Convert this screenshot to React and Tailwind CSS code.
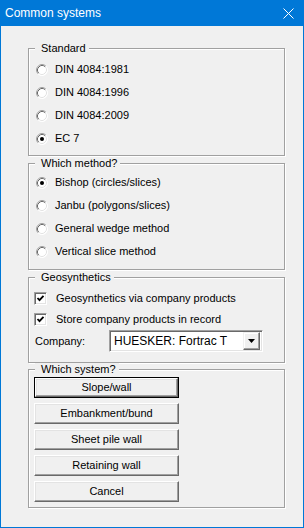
import React from 'react';

const font = { fontFamily: '"Liberation Sans", Arial, sans-serif' };

const Radio = ({ checked }) => (
    <svg width="12" height="12" viewBox="0 0 12 12" className="shrink-0">
        <circle cx="6" cy="6" r="5.5" fill="#fff" />
        <path d="M2.11 9.89 A5.5 5.5 0 0 1 9.89 2.11" stroke="#a0a0a0" fill="none" />
        <path d="M9.89 2.11 A5.5 5.5 0 0 1 2.11 9.89" stroke="#ffffff" fill="none" />
        <path d="M2.82 9.18 A4.5 4.5 0 0 1 9.18 2.82" stroke="#696969" fill="none" />
        <path d="M9.18 2.82 A4.5 4.5 0 0 1 2.82 9.18" stroke="#e3e3e3" fill="none" />
        {checked && <circle cx="6" cy="6" r="2" fill="#000" />}
    </svg>
);

const Check = () => (
    <div className="w-[13px] h-[13px] shrink-0 bg-white border-t border-l border-t-[#a0a0a0] border-l-[#a0a0a0] border-b border-r border-b-white border-r-white shadow-[inset_1px_1px_0_#696969,inset_-1px_-1px_0_#e3e3e3] flex items-center justify-center">
        <svg width="9" height="9" viewBox="0 0 9 9">
            <path d="M1.5 4 L3.5 6.2 L7.5 1.8" stroke="#000" strokeWidth="1.8" fill="none" />
        </svg>
    </div>
);

const Group = ({ label, height, mt, children }) => (
    <div
        className={`ml-[27px] w-[257px] border border-[#a0a0a0] shadow-[inset_1px_1px_0_#fff,1px_1px_0_#fff] ${height} ${mt}`}
    >
        <div className="-mt-[7px] ml-[6px] pl-[6px] pr-[3px] w-fit bg-[#f0f0f0] leading-[13px]">{label}</div>
        {children}
    </div>
);

const RadioRow = ({ label, checked }) => (
    <div className="h-[23px] flex items-center pl-[7px] gap-[7px]">
        <Radio checked={checked} />
        <span className="leading-[13px]">{label}</span>
    </div>
);

const CheckRow = ({ label }) => (
    <div className="h-[21px] flex items-center pl-[5px] gap-[9px]">
        <Check />
        <span className="leading-[13px]">{label}</span>
    </div>
);

const Btn = ({ text, isDefault }) => {
    const inner = (
        <div className="h-full w-full flex items-center justify-center bg-[#f0f0f0] border-t border-l border-t-white border-l-white border-b border-r border-b-[#696969] border-r-[#696969] shadow-[inset_-1px_-1px_0_#a0a0a0,inset_1px_1px_0_#e3e3e3]">
            {text}
        </div>
    );
    if (isDefault) {
        return <div className="ml-[5px] w-[145px] h-[21px] border border-black">{inner}</div>;
    }
    return <div className="ml-[5px] w-[145px] h-[21px]">{inner}</div>;
};

const App = () => {
    return (
        <div className="w-[304px] h-[528px] flex flex-col text-[11px] text-black bg-[#f0f0f0]" style={font}>
            <div className="h-[26px] bg-[#0078d7] flex items-center justify-between pl-[5px] pr-[10px] shrink-0">
                <span className="text-white text-[12px] leading-[14px]">Common systems</span>
                <svg width="11" height="11" viewBox="0 0 11 11">
                    <path d="M0.5 0.5 L10.5 10.5 M10.5 0.5 L0.5 10.5" stroke="#fff" strokeWidth="1" />
                </svg>
            </div>
            <div className="flex-1 border-l border-r border-b border-[#0078d7] pt-[22px]">
                <Group label="Standard" height="h-[108px]" mt="">
                    <div className="mt-[3px]">
                        <RadioRow label="DIN 4084:1981" />
                        <RadioRow label="DIN 4084:1996" />
                        <RadioRow label="DIN 4084:2009" />
                        <RadioRow label="EC 7" checked />
                    </div>
                </Group>

                <Group label="Which method?" height="h-[107px]" mt="mt-[7px]">
                    <div className="mt-[1px]">
                        <RadioRow label="Bishop (circles/slices)" checked />
                        <RadioRow label="Janbu (polygons/slices)" />
                        <RadioRow label="General wedge method" />
                        <RadioRow label="Vertical slice method" />
                    </div>
                </Group>

                <Group label="Geosynthetics" height="h-[86px]" mt="mt-[7px]">
                    <div className="mt-[4px]">
                        <CheckRow label="Geosynthetics via company products" />
                        <CheckRow label="Store company products in record" />
                        <div className="flex items-center h-[22px] pl-[6px]">
                            <span className="w-[74px] leading-[13px]">Company:</span>
                            <div className="w-[154px] h-[22px] bg-white flex items-center justify-between border-t border-l border-t-[#a0a0a0] border-l-[#a0a0a0] border-b border-r border-b-white border-r-white shadow-[inset_1px_1px_0_#696969,inset_-1px_-1px_0_#e3e3e3] pl-[4px] pr-[2px]">
                                <span className="text-[12px] leading-[14px]">HUESKER: Fortrac T</span>
                                <div className="w-[17px] h-[18px] bg-[#f0f0f0] flex items-center justify-center border-t border-l border-t-[#f0f0f0] border-l-[#f0f0f0] border-b border-r border-b-[#696969] border-r-[#696969] shadow-[inset_-1px_-1px_0_#a0a0a0,inset_1px_1px_0_#fff]">
                                    <svg width="7" height="4" viewBox="0 0 7 4">
                                        <path d="M0 0 H7 L3.5 4 Z" fill="#000" />
                                    </svg>
                                </div>
                            </div>
                        </div>
                    </div>
                </Group>

                <Group label="Which system?" height="h-[139px]" mt="mt-[6px]">
                    <div className="mt-[1px] flex flex-col gap-[5px]">
                        <Btn text="Slope/wall" isDefault />
                        <Btn text="Embankment/bund" />
                        <Btn text="Sheet pile wall" />
                        <Btn text="Retaining wall" />
                        <Btn text="Cancel" />
                    </div>
                </Group>
            </div>
        </div>
    );
};

export default App;
